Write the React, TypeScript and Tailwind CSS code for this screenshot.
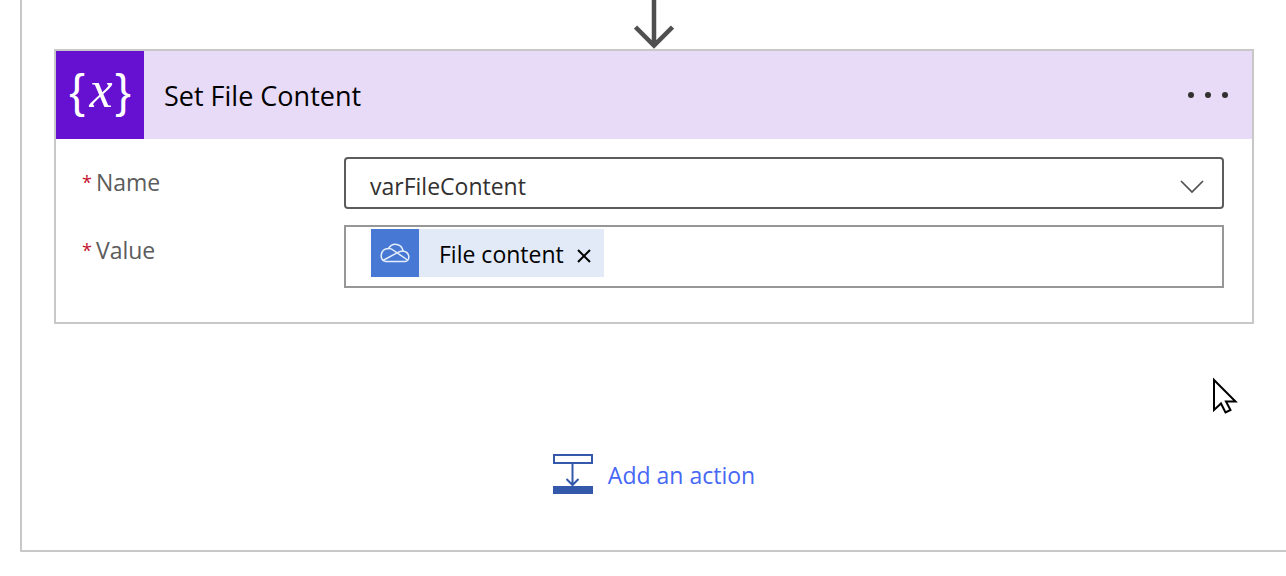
import React from "react";

function FlowArrow() {
  return (
    <svg width="40" height="49" viewBox="0 0 40 49" fill="none" stroke="#505050" strokeWidth="4.500" aria-hidden="true">
      <path d="M20 0V46M1.500 27L20 45.500L38.500 27" />
    </svg>
  );
}

function VariableIcon() {
  return (
    <svg className="size-[88px] shrink-0 bg-[#6610d2]" viewBox="0 0 88 88" fill="#fff" textAnchor="middle" role="img" aria-label="Variable">
      <text x="21" y="56" fontSize="47" fontFamily="Liberation Sans, sans-serif">{"{"}</text>
      <text x="45" y="56" fontSize="52" fontStyle="italic" fontFamily="Liberation Serif, serif">x</text>
      <text x="67" y="56" fontSize="47" fontFamily="Liberation Sans, sans-serif">{"}"}</text>
    </svg>
  );
}

function CloudIcon() {
  return (
    <svg className="size-12 shrink-0 bg-[#4779d4]" viewBox="0 0 48 48" fill="none" stroke="#e6eefb" strokeWidth="1.5" strokeLinejoin="round" strokeLinecap="round" aria-hidden="true">
      <path d="M14.500 32.500H34A4.200 4.200 0 0 0 37.800 28Q37.500 22.800 32 22Q31 17 27 15.800Q21 13.800 17.500 19.500Q11 19.800 10.200 26Q9.800 31.500 14.500 32.500Z" />
      <path d="M17.500 19.500Q20 19.300 22 21L36.500 31M12 31.500L26 23.800Q29 22 32 22" />
    </svg>
  );
}

function InsertIcon() {
  return (
    <svg width="40" height="40" viewBox="0 0 40 40" fill="none" stroke="#3458aa" strokeWidth="2" aria-hidden="true">
      <rect x="1" y="1" width="38" height="8" />
      <path d="M19.500 10V31M13.500 25L19.500 31L25.500 25" />
      <rect x="0" y="32" width="40" height="8" fill="#3458aa" stroke="none" />
    </svg>
  );
}

function Pointer() {
  return (
    <svg className="pointer-events-none absolute right-12 top-[377px]" width="26" height="38" viewBox="0 0 26 38" fill="#fff" stroke="#000" strokeWidth="2" aria-hidden="true">
      <path d="M2 3V33L9 26.500L13.500 35.500L18.500 33L14 24.500H23.500Z" />
    </svg>
  );
}

function FieldLabel({ htmlFor, children }: { htmlFor: string; children: React.ReactNode }) {
  return (
    <label htmlFor={htmlFor} className="flex h-[50px] w-[262px] shrink-0 items-center gap-1 text-[#5c5c5c]">
      <span className="text-[18px] text-[#c4122f]">*</span>
      {children}
    </label>
  );
}

export default function App() {
  return (
    <main className="relative bg-white pb-6 pl-5 font-['Open_Sans',sans-serif] text-[23px] leading-8">
      <section className="border-b-2 border-l-2 border-[#c8c8c8] px-8 pb-14">
        <div className="flex justify-center">
          <FlowArrow />
        </div>
        <article className="border-2 border-[#c8c8c8]">
          <header className="flex items-center bg-[#e8dbf7]">
            <VariableIcon />
            <h2 className="flex-1 pl-5 pt-[2px] text-[27px] text-black">Set File Content</h2>
            <button type="button" aria-label="More commands" className="mr-5 flex h-8 items-center gap-[11px] px-1">
              <span className="size-[6px] rounded-full bg-[#323130]" />
              <span className="size-[6px] rounded-full bg-[#323130]" />
              <span className="size-[6px] rounded-full bg-[#323130]" />
            </button>
          </header>
          <div className="flex flex-col gap-4 pb-[34px] pl-[26px] pr-7 pt-[18px]">
            <div className="flex">
              <FieldLabel htmlFor="name">Name</FieldLabel>
              <div className="relative flex-1">
                <select id="name" className="h-[52px] w-full appearance-none rounded border-2 border-[#5c5c5c] bg-white pl-6 pr-14 pt-[6px] text-[#323130]">
                  <option>varFileContent</option>
                </select>
                <svg className="pointer-events-none absolute right-5 top-[23px]" width="24" height="14" viewBox="0 0 24 14" fill="none" stroke="#505050" strokeWidth="1.700" aria-hidden="true">
                  <path d="M1 1L12 12L23 1" />
                </svg>
              </div>
            </div>
            <div className="flex">
              <FieldLabel htmlFor="value">Value</FieldLabel>
              <div className="flex h-[63px] min-w-0 flex-1 items-start border-2 border-[#979797] pl-[25px] pt-[2px]">
                <div className="flex h-12 items-center bg-[#e2eaf8] text-black">
                  <CloudIcon />
                  <span className="pl-5 pr-3 pt-[2px]">File content</span>
                  <button type="button" aria-label="Remove File content" className="pr-3">
                    <svg width="16" height="16" viewBox="0 0 16 16" stroke="#000" strokeWidth="2" className="mt-[6px]" aria-hidden="true">
                      <path d="M2 2L14 14M14 2L2 14" />
                    </svg>
                  </button>
                </div>
                <input id="value" type="text" className="h-12 min-w-0 flex-1 px-2 outline-none" />
              </div>
            </div>
          </div>
        </article>
        <div className="flex justify-center pt-[130px]">
          <button type="button" className="flex items-center gap-[15px] text-[#4668f5]">
            <InsertIcon />
            <span className="pt-[2px]">Add an action</span>
          </button>
        </div>
      </section>
      <Pointer />
    </main>
  );
}
